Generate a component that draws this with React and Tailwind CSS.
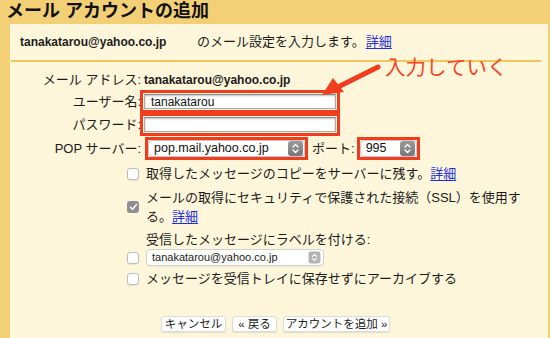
import React from "react";

function Stepper({ light }) {
  return (
    <span
      className={
        "flex h-[15px] w-[15px] items-center justify-center rounded-[3px] " +
        (light ? "bg-[#b4b4b6]" : "bg-gradient-to-b from-[#9a9a9c] to-[#77777a]")
      }
    >
      <svg width="9" height="11" viewBox="0 0 9 11" fill="none" stroke="#fff" strokeWidth="1.4" strokeLinecap="round" strokeLinejoin="round">
        <path d="M2 4 L4.5 1.6 L7 4" />
        <path d="M2 7 L4.5 9.4 L7 7" />
      </svg>
    </span>
  );
}

function Checkbox({ checked }) {
  return checked ? (
    <span className="flex h-[12px] w-[12px] shrink-0 items-center justify-center rounded-[3px] bg-[#8e8e93]">
      <svg width="9" height="8" viewBox="0 0 9 8" fill="none" stroke="#fff" strokeWidth="1.4" strokeLinecap="round" strokeLinejoin="round">
        <path d="M1.5 4.3 L3.5 6.3 L7.5 1.5" />
      </svg>
    </span>
  ) : (
    <span className="block h-[12px] w-[12px] shrink-0 rounded-[3px] border border-[#bdbdbd] bg-white shadow-[0_1px_1px_rgba(0,0,0,0.08)]" />
  );
}

function RedBox({ className, children }) {
  return <div className={"border-[3px] border-[#f23c1e] " + className}>{children}</div>;
}

function TextInput({ value }) {
  return (
    <div className="flex h-full items-center border border-[#a9a9a9] border-t-[#8c8c8c] bg-white pl-[6px] text-[12px] text-[#111] shadow-[inset_0_1px_2px_rgba(0,0,0,0.25)]">
      {value}
    </div>
  );
}

function Select({ value }) {
  return (
    <div className="flex h-full items-center justify-between rounded-[4px] border border-[#c6c6c6] bg-white pl-[5px] pr-[1px] text-[12.5px] text-[#111]">
      <span>{value}</span>
      <Stepper />
    </div>
  );
}

const Link = ({ children }) => <a className="text-[#1f2fe0] underline underline-offset-2">{children}</a>;

export default function App() {
  return (
    <div className="relative flex h-[338px] w-[550px] flex-col overflow-hidden bg-[#f3cf76] font-['Liberation_Sans','Noto_Sans_CJK_JP',sans-serif] text-[#1b1b1b]">
      <h1 className="h-[24px] pl-[6px] text-[18px] font-bold leading-[23px] text-[#111]">メール アカウントの追加</h1>

      <div className="ml-[10px] mr-[2px] flex-1 bg-[#fef6da] text-[13px]">
        <div className="flex h-[36px] items-center pl-[10px]">
          <span className="w-[177px] text-[12px] font-bold">tanakatarou@yahoo.co.jp</span>
          <span>のメール設定を入力します。</span>
          <span className="ml-[1px]"><Link>詳細</Link></span>
        </div>
        <div className="ml-[1px] mr-[7px] h-[2px] bg-[#f3c65b]" />

        <div className="mt-[7px] flex h-[21px] items-center">
          <span className="w-[131px] text-right">メール アドレス:</span>
          <span className="ml-[3px] text-[12px] font-bold">tanakatarou@yahoo.co.jp</span>
        </div>
        <div className="flex h-[23px] items-center">
          <span className="w-[131px] text-right">ユーザー名:</span>
          <RedBox className="ml-[-1px] h-[23px] w-[200px] p-[1px]">
            <TextInput value="tanakatarou" />
          </RedBox>
        </div>
        <div className="flex h-[23px] items-center">
          <span className="w-[131px] text-right">パスワード:</span>
          <RedBox className="ml-[-1px] h-[23px] w-[200px] p-[1px]">
            <TextInput value="" />
          </RedBox>
        </div>
        <div className="mt-[1px] flex h-[23px] items-center">
          <span className="w-[131px] text-right">POP サーバー:</span>
          <RedBox className="ml-[4px] h-[23px] w-[163px]">
            <Select value="pop.mail.yahoo.co.jp" />
          </RedBox>
          <span className="ml-[4px]">ポート:</span>
          <RedBox className="ml-[2px] h-[23px] w-[63px]">
            <Select value="995" />
          </RedBox>
        </div>

        <div className="mt-[3px] flex h-[22px] items-center gap-[7px] pl-[117px]">
          <Checkbox />
          <span>
            取得したメッセージのコピーをサーバーに残す。<Link>詳細</Link>
          </span>
        </div>
        <div className="mt-[3px] flex items-center gap-[7px] pl-[117px]">
          <Checkbox checked />
          <span className="w-[382px] leading-[19px]">
            メールの取得にセキュリティで保護された接続（SSL）を使用する。<Link>詳細</Link>
          </span>
        </div>
        <div className="mt-[5px] flex gap-[7px] pl-[117px]">
          <div className="mt-[21px] shrink-0">
            <Checkbox />
          </div>
          <div className="flex flex-col">
            <span className="leading-[18px]">受信したメッセージにラベルを付ける:</span>
            <div className="flex h-[17px] w-[178px] items-center justify-between rounded-[4px] border border-[#d2d2d2] bg-white pl-[5px] pr-[1px] text-[11px] shadow-[0_1px_1px_rgba(0,0,0,0.06)]">
              <span>tanakatarou@yahoo.co.jp</span>
              <span className="scale-[0.8]">
                <Stepper light />
              </span>
            </div>
          </div>
        </div>
        <div className="mt-[2px] flex h-[22px] items-center gap-[7px] pl-[117px]">
          <Checkbox />
          <span>メッセージを受信トレイに保存せずにアーカイブする</span>
        </div>

        <div className="mt-[26px] flex gap-[6px] pl-[151px] text-[11.5px]">
          <button className="h-[16px] w-[65px] rounded-[3px] border border-[#dcdcdc] bg-white leading-[14px] shadow-[0_1px_1px_rgba(0,0,0,0.1)]">キャンセル</button>
          <button className="h-[16px] w-[45px] rounded-[3px] border border-[#dcdcdc] bg-white leading-[14px] shadow-[0_1px_1px_rgba(0,0,0,0.1)]">« 戻る</button>
          <button className="h-[16px] w-[107px] rounded-[3px] border border-[#dcdcdc] bg-white leading-[14px] shadow-[0_1px_1px_rgba(0,0,0,0.1)]">アカウントを追加 »</button>
        </div>
      </div>

      <span className="absolute left-[385px] top-[56px] text-[20.5px] leading-[24px] text-[#f4452a]">入力していく</span>
      <svg className="absolute left-[318px] top-[62px]" width="66" height="38" viewBox="0 0 66 38">
        <path d="M60 5 L22 24" stroke="#f23c1e" strokeWidth="5" strokeLinecap="round" />
        <path d="M4 33 L15 16 L26 30 Z" fill="#f23c1e" />
      </svg>
    </div>
  );
}
